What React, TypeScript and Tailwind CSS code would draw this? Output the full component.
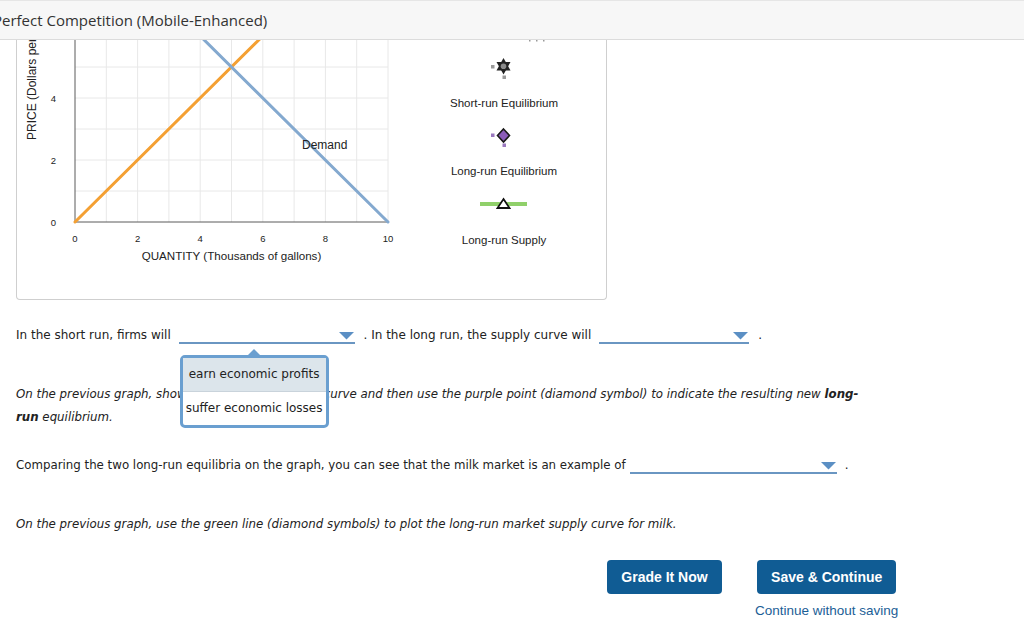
import React from "react";

// graph scale: quantity -> x, price -> y (page pixels)
const qx = (q: number) => 75 + q * 31.3;
const py = (p: number) => 222 - p * 31;

const Dropdown: React.FC<{ width: number; children?: React.ReactNode }> = ({ width, children }) => (
  <span
    className="relative inline-block align-top h-[19px] border-b-2 border-[#6a96c2]"
    style={{ width }}
  >
    <svg className="absolute right-[1px] top-[7px]" width="15" height="8" viewBox="0 0 15 8">
      <polygon points="0,0 15,0 7.5,7.5" fill="#5b8fc4" />
    </svg>
    {children}
  </span>
);

const Graph: React.FC = () => {
  const gridX = [1, 2, 3, 4, 5, 6, 7, 8, 9, 10];
  const gridY = [1, 2, 3, 4, 5];
  return (
    <svg width="589" height="259" viewBox="17 40 589 259" className="block">
      {gridX.map((q) => (
        <line key={`gx${q}`} x1={qx(q)} y1={30} x2={qx(q)} y2={222} stroke="#e8e8e8" strokeWidth="1" />
      ))}
      {gridY.map((p) => (
        <line key={`gy${p}`} x1={75} y1={py(p)} x2={qx(10)} y2={py(p)} stroke="#e8e8e8" strokeWidth="1" />
      ))}
      <line x1={75} y1={30} x2={75} y2={222.5} stroke="#5a5a5a" strokeWidth="1" />
      <line x1={74.5} y1={222} x2={qx(10)} y2={222} stroke="#5a5a5a" strokeWidth="1" />

      {/* supply and demand */}
      <line x1={qx(0)} y1={py(0)} x2={qx(6.5)} y2={py(6.5)} stroke="#f4a033" strokeWidth="3" strokeLinecap="round" />
      <line x1={qx(10)} y1={py(0)} x2={qx(3.5)} y2={py(6.5)} stroke="#84a9cf" strokeWidth="3" strokeLinecap="round" />

      <g fontFamily="'Liberation Sans', Arial, sans-serif" fill="#222">
        <text x={302} y={148.5} fontSize="12">Demand</text>
        {[0, 2, 4].map((p) => (
          <text key={`ty${p}`} x={53.5} y={py(p) + 3.5} fontSize="9.5" textAnchor="middle">{p}</text>
        ))}
        {[0, 2, 4, 6, 8, 10].map((q) => (
          <text key={`tx${q}`} x={qx(q)} y={241.5} fontSize="9.5" textAnchor="middle">{q}</text>
        ))}
        <text x={231.5} y={260} fontSize="11.6" textAnchor="middle">QUANTITY (Thousands of gallons)</text>
        <text transform="translate(36,140) rotate(-90)" fontSize="12">PRICE (Dollars per</text>

        <text x={504} y={107} fontSize="11.5" textAnchor="middle">Short-run Equilibrium</text>
        <text x={504} y={175} fontSize="11.5" textAnchor="middle">Long-run Equilibrium</text>
        <text x={504} y={244} fontSize="11.5" textAnchor="middle">Long-run Supply</text>
      </g>

      {/* clipped label above the legend */}
      <g fill="#999">
        <rect x={529} y={40} width="1.5" height="1.5" />
        <rect x={536} y={40} width="1.5" height="1.5" />
        <rect x={543} y={40} width="1.5" height="1.5" />
      </g>

      {/* short-run equilibrium: star */}
      <rect x={491} y={65} width="3.5" height="3.5" fill="#9a9a9a" />
      <rect x={502.5} y={75.5} width="3.5" height="3.5" fill="#9a9a9a" />
      <polygon points="503.5,58 510.5,70.5 496.5,70.5" fill="#222" />
      <polygon points="503.5,74.5 496.5,62 510.5,62" fill="#222" />
      <circle cx={503.5} cy={66.3} r="2.8" fill="#8a8a8a" />

      {/* long-run equilibrium: diamond */}
      <rect x={491} y={133.5} width="3.5" height="3.5" fill="#9a78bf" />
      <rect x={502.5} y={143.5} width="3.5" height="3.5" fill="#9a78bf" />
      <polygon points="503.5,129 509.5,135.5 503.5,142 497.5,135.5" fill="#8b5cb8" stroke="#1a1a1a" strokeWidth="1.6" />

      {/* long-run supply: line with triangle */}
      <line x1={480} y1={204} x2={527} y2={204} stroke="#90d06a" strokeWidth="4" />
      <polygon points="503.5,199 509.5,208 497.5,208" fill="#fff" stroke="#111" strokeWidth="1.8" strokeLinejoin="miter" />
    </svg>
  );
};

export default function App() {
  return (
    <div className="w-[1024px] h-[639px] overflow-hidden bg-white text-[#222]">
      <div className="h-[40px] border-t border-t-[#e6e6e6] border-b border-b-[#dcdcdc] bg-[#f7f7f7] flex items-center overflow-hidden">
        <span
          className="-ml-[7px] text-[15px] text-[#333] whitespace-nowrap"
          style={{ fontFamily: "'Open Sans', sans-serif" }}
        >
          Perfect Competition (Mobile-Enhanced)
        </span>
      </div>

      <div className="ml-[16px] w-[591px] h-[260px] border border-t-0 border-[#cfcfcf] rounded-b-[4px] overflow-hidden">
        <Graph />
      </div>

      <div className="px-[16px] text-[12px]" style={{ fontFamily: "'DejaVu Sans', Verdana, sans-serif" }}>
        <div className="mt-[25px] h-[21px] leading-[20px] whitespace-nowrap">
          In the short run, firms will{" "}
          <span className="ml-[4px]">
            <Dropdown width={176}>
              <span className="absolute left-[1px] top-[30px] z-10 w-[149px] h-[73px] bg-white border-[3px] border-[#6a9fd0] rounded-[5px]">
                <svg className="absolute left-[63px] -top-[10px]" width="16" height="9" viewBox="0 0 16 9">
                  <polygon points="0,9 8,1 16,9" fill="#6a9fd0" />
                </svg>
                <span className="block h-[34px] leading-[32px] bg-[#dce5eb] border-b border-[#c9d3db] text-center">
                  earn economic profits
                </span>
                <span className="block h-[33px] leading-[32px] text-center">suffer economic losses</span>
              </span>
            </Dropdown>
          </span>
          <span className="ml-[9px]">. In the long run, the supply curve will</span>
          <span className="ml-[8px]">
            <Dropdown width={150} />
          </span>
          <span className="ml-[9px]">.</span>
        </div>

        <div className="mt-[37px] leading-[23px] italic text-[11.8px]">
          <div className="whitespace-nowrap">
            On the previous graph, show the shift of the supply curve and then use the purple point (diamond
            symbol) to indicate the resulting new <b>long-</b>
          </div>
          <div>
            <b>run</b> equilibrium.
          </div>
        </div>

        <div className="mt-[26px] h-[21px] leading-[20px] whitespace-nowrap text-[11.8px]">
          Comparing the two long-run equilibria on the graph, you can see that the milk market is an example of
          <span className="ml-[4px]">
            <Dropdown width={207} />
          </span>
          <span className="ml-[8px]">.</span>
        </div>

        <div className="mt-[38px] leading-[20px] italic whitespace-nowrap text-[11.8px]">
          On the previous graph, use the green line (diamond symbols) to plot the long-run market supply curve
          for milk.
        </div>
      </div>

      <div
        className="mt-[26px] ml-[607px] flex items-start gap-[33px]"
        style={{ fontFamily: "'Liberation Sans', Arial, sans-serif" }}
      >
        <button className="w-[115px] h-[34px] rounded-[4px] bg-[#105c94] text-white font-bold text-[14px]">
          Grade It Now
        </button>
        <div className="flex flex-col items-center">
          <button className="w-[139px] h-[34px] rounded-[4px] bg-[#105c94] text-white font-bold text-[14px]">
            Save &amp; Continue
          </button>
          <span className="mt-[7px] leading-[20px] text-[13.5px] text-[#1b5e96] whitespace-nowrap">
            Continue without saving
          </span>
        </div>
      </div>
    </div>
  );
}
